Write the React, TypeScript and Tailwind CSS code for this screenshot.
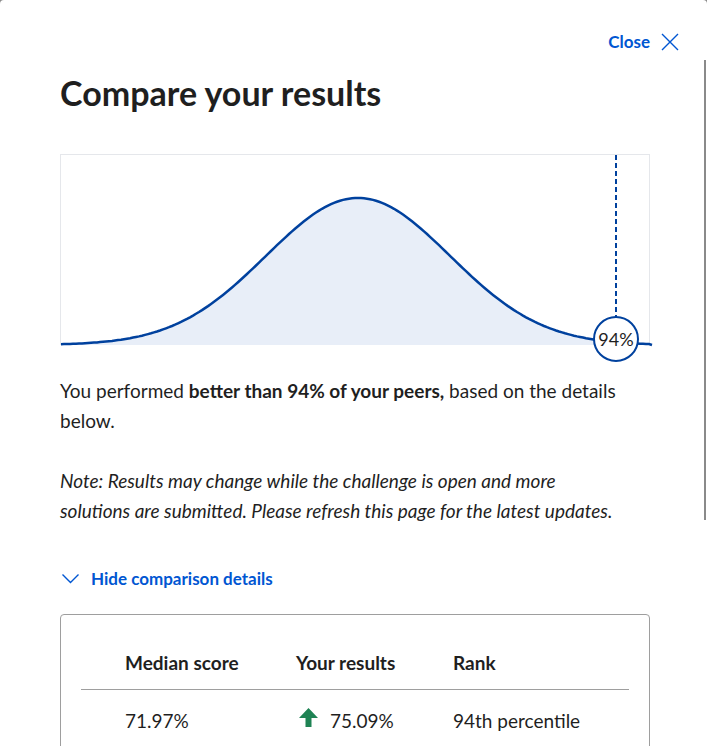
const W = 590;
const H = 190;

function curvePoints() {
  const pts: [number, number][] = [];
  const mu = 297;
  const sigma = 92;
  const amp = 147;
  for (let x = 0; x <= W; x += 3) {
    const y = H - amp * Math.exp(-((x - mu) ** 2) / (2 * sigma * sigma));
    pts.push([x, y]);
  }
  return pts;
}

function DistributionChart() {
  const pts = curvePoints();
  const line = pts.map(([x, y], i) => `${i === 0 ? "M" : "L"}${x.toFixed(1)},${y.toFixed(1)}`).join(" ");
  const area = `${line} L${W},${H} L0,${H} Z`;
  const cx = 555;
  const cy = 184;
  return (
    <div className="relative h-[191px] border border-[#e5e7eb]">
      <svg width={W + 2} height={H + 20} className="absolute left-0 top-0 overflow-visible" viewBox={`0 0 ${W + 2} ${H + 20}`}>
        <path d={area} fill="#e8eef8" />
        <path d={line + ` L${W + 1},${H}`} fill="none" stroke="#00419e" strokeWidth={2.5} />
        <line x1={cx} y1={0} x2={cx} y2={cy - 22} stroke="#00419e" strokeWidth={2} strokeDasharray="5 3" />
        <circle cx={cx} cy={cy} r={22} fill="white" stroke="#00419e" strokeWidth={2} />
        <text x={cx} y={cy + 6.5} textAnchor="middle" fontSize="18" fill="#1f1f1f" fontFamily="Lato, sans-serif">
          94%
        </text>
      </svg>
    </div>
  );
}

export default function App() {
  return (
    <div className="bg-[#8a8a8a] w-[707px] h-[746px] overflow-hidden font-['Lato',sans-serif] text-[#1f1f1f]">
      <div className="relative bg-white h-full rounded-t-[4px]">
        <div className="absolute right-[1px] top-[60px] h-[460px] w-[2px] bg-[#8a8a8a]" />

        <div className="flex justify-end items-center pt-[30px] pr-[28px] h-[54px]">
          <button className="flex items-center gap-[11px] text-[#0056d2] font-bold text-[17px] leading-[24px]">
            Close
            <svg width="18" height="18" viewBox="0 0 18 18" fill="none" stroke="#0056d2" strokeWidth={1.4}>
              <path d="M1 1 L17 17 M17 1 L1 17" />
            </svg>
          </button>
        </div>

        <div className="pl-[60px] pr-[57px]">
          <h1 className="text-[34px] leading-[40px] font-bold mt-[19px]">Compare your results</h1>

          <div className="mt-[41px]">
            <DistributionChart />
          </div>

          <p className="mt-[31px] text-[19px] leading-[30px]">
            You performed <b>better than 94% of your peers,</b> based on the details below.
          </p>
          <p className="mt-[30px] max-w-[562px] text-[19px] leading-[30px] italic">
            Note: Results may change while the challenge is open and more solutions are submitted. Please refresh
            this page for the latest updates.
          </p>

          <button className="mt-[41px] flex items-center gap-[12px] pl-[2px] text-[#0056d2] font-bold text-[17px] leading-[24px]">
            <svg width="17" height="10" viewBox="0 0 17 10" fill="none" stroke="#0056d2" strokeWidth={1.4}>
              <path d="M0.5 0.5 L8.5 8.5 L16.5 0.5" />
            </svg>
            Hide comparison details
          </button>

          <div className="mt-[23px] border border-[#9e9e9e] rounded-[4px] px-[20px] pt-[36px] pb-[40px]">
            <div className="grid grid-cols-[171px_157px_1fr] pl-[44px] text-[19px] font-bold leading-[24px] pb-[14px] border-b border-[#9e9e9e]">
              <span>Median score</span>
              <span>Your results</span>
              <span>Rank</span>
            </div>
            <div className="grid grid-cols-[171px_157px_1fr] pl-[44px] text-[19px] leading-[24px] pt-[19px]">
              <span>71.97%</span>
              <span className="flex items-center gap-[12px] pl-[3px]">
                <svg width="19" height="19" viewBox="0 0 19 19" fill="#1f8354" className="-mt-[8px]">
                  <path d="M9.5 0 L19 10 L12.5 10 L12.5 19 L6.5 19 L6.5 10 L0 10 Z" />
                </svg>
                75.09%
              </span>
              <span>94th percentile</span>
            </div>
          </div>
        </div>
      </div>
    </div>
  );
}
